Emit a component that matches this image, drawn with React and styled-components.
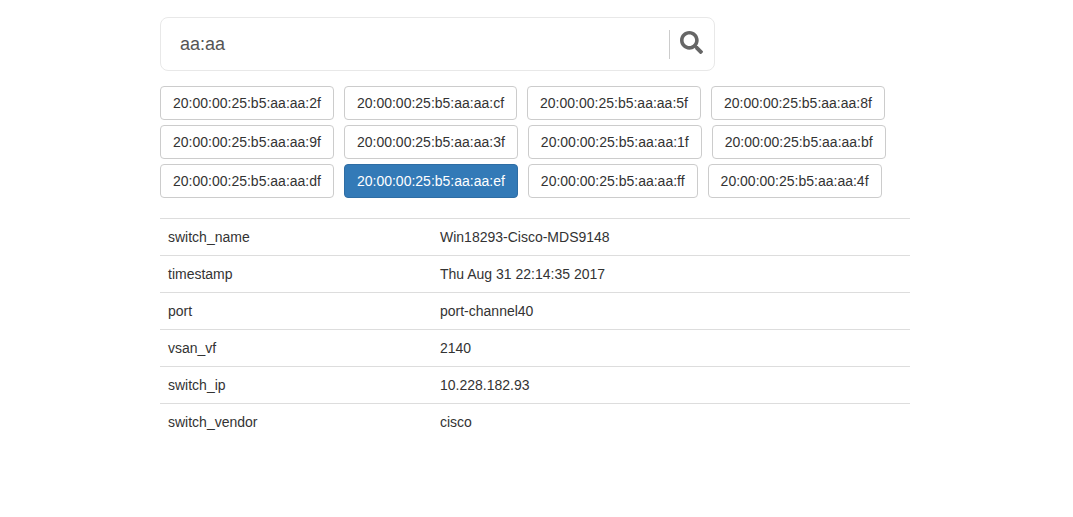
import styled, { createGlobalStyle } from "styled-components";
import { FaSearch } from "react-icons/fa";

const GlobalStyle = createGlobalStyle`
  body {
    margin: 0;
    background: #fff;
    font-family: "Liberation Sans", Arial, sans-serif;
    font-size: 14px;
    line-height: 20px;
    color: #333;
  }
`;

const Container = styled.div`
  width: 750px;
  margin-left: 160px;
  padding-top: 17px;
`;

const SearchBox = styled.div`
  box-sizing: border-box;
  width: 555px;
  height: 54px;
  display: flex;
  align-items: center;
  padding: 0 11px 0 19px;
  border: 1px solid #e8e8e8;
  border-radius: 8px;
`;

const SearchInput = styled.input`
  flex: 1;
  min-width: 0;
  border: 0;
  outline: 0;
  padding: 0;
  font-family: inherit;
  font-size: 18px;
  color: #555;
`;

const SearchDivider = styled.div`
  width: 1px;
  height: 29px;
  margin: 0 10px 0 0;
  background: #ccc;
`;

const SearchIcon = styled(FaSearch)`
  display: block;
  width: 23px;
  height: 23px;
  margin-bottom: 3px;
  color: #666;
`;

const ResultList = styled.div`
  display: flex;
  flex-wrap: wrap;
  gap: 5px 10px;
  margin-top: 15px;
`;

const ResultButton = styled.button`
  box-sizing: border-box;
  height: 34px;
  padding: 6px 12px;
  border: 1px solid ${(p) => (p.$active ? "#2e6da4" : "#ccc")};
  border-radius: 4px;
  background: ${(p) => (p.$active ? "#337ab7" : "#fff")};
  color: ${(p) => (p.$active ? "#fff" : "#333")};
  font-family: inherit;
  font-size: 14px;
  line-height: 20px;
`;

const Table = styled.table`
  width: 100%;
  margin-top: 20px;
  border-collapse: collapse;
  table-layout: fixed;
`;

const Cell = styled.td`
  padding: 8px;
  border-top: 1px solid #ddd;
  line-height: 20px;
  &:first-child {
    width: 256px;
  }
`;

const macs = [
  "2f", "cf", "5f", "8f",
  "9f", "3f", "1f", "bf",
  "df", "ef", "ff", "4f",
];

const rows = [
  ["switch_name", "Win18293-Cisco-MDS9148"],
  ["timestamp", "Thu Aug 31 22:14:35 2017"],
  ["port", "port-channel40"],
  ["vsan_vf", "2140"],
  ["switch_ip", "10.228.182.93"],
  ["switch_vendor", "cisco"],
];

const App = () => {
  return (
    <Container>
      <GlobalStyle />
      <SearchBox>
        <SearchInput defaultValue="aa:aa" />
        <SearchDivider />
        <SearchIcon />
      </SearchBox>
      <ResultList>
        {macs.map((m) => (
          <ResultButton key={m} $active={m === "ef"}>
            20:00:00:25:b5:aa:aa:{m}
          </ResultButton>
        ))}
      </ResultList>
      <Table>
        <tbody>
          {rows.map(([key, value]) => (
            <tr key={key}>
              <Cell>{key}</Cell>
              <Cell>{value}</Cell>
            </tr>
          ))}
        </tbody>
      </Table>
    </Container>
  );
};

export default App;
